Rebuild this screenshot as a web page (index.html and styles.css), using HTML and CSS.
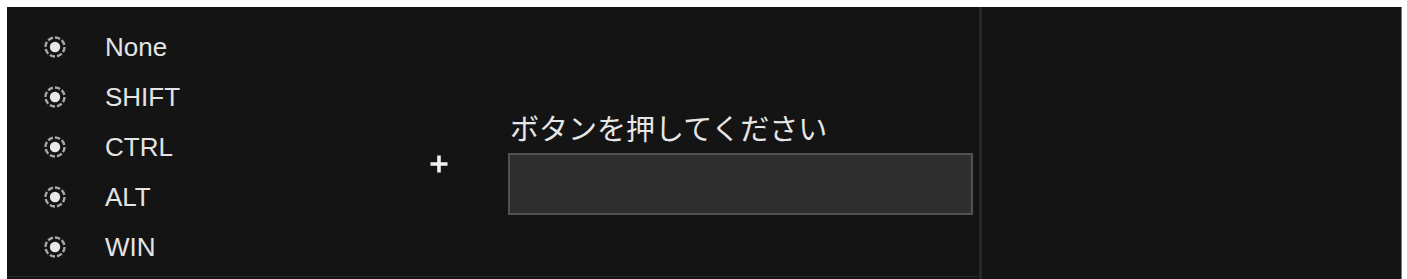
FILE: index.html
```html
<!DOCTYPE html>
<html lang="ja">
<head>
<meta charset="utf-8">
<link rel="stylesheet" href="styles.css">
</head>
<body>
<div class="panel">
  <div class="left">
    <ul class="modifiers">
      <li class="mod"><svg class="radio" viewBox="0 0 24 24"><circle cx="12" cy="12" r="9.5" class="ring"/><circle cx="12" cy="12" r="5.2" class="dot"/></svg><span>None</span></li>
      <li class="mod"><svg class="radio" viewBox="0 0 24 24"><circle cx="12" cy="12" r="9.5" class="ring"/><circle cx="12" cy="12" r="5.2" class="dot"/></svg><span>SHIFT</span></li>
      <li class="mod"><svg class="radio" viewBox="0 0 24 24"><circle cx="12" cy="12" r="9.5" class="ring"/><circle cx="12" cy="12" r="5.2" class="dot"/></svg><span>CTRL</span></li>
      <li class="mod"><svg class="radio" viewBox="0 0 24 24"><circle cx="12" cy="12" r="9.5" class="ring"/><circle cx="12" cy="12" r="5.2" class="dot"/></svg><span>ALT</span></li>
      <li class="mod"><svg class="radio" viewBox="0 0 24 24"><circle cx="12" cy="12" r="9.5" class="ring"/><circle cx="12" cy="12" r="5.2" class="dot"/></svg><span>WIN</span></li>
    </ul>
    <svg class="plus" viewBox="0 0 20 20"><path d="M10 1.5V18.5M1.5 10H18.5"/></svg>
    <div class="key-col">
      <div class="label">ボタンを押してください</div>
      <div class="key-input"></div>
    </div>
  </div>
  <div class="divider"></div>
  <div class="right"></div>
</div>
</body>
</html>
```

FILE: styles.css
```css
html, body {
  margin: 0;
  padding: 0;
  background: #ffffff;
}

body {
  width: 1407px;
  height: 279px;
  overflow: hidden;
  font-family: "Liberation Sans", Arial, sans-serif;
}

.panel {
  margin: 7px 0 0 7px;
  width: 1394px;
  height: 272px;
  background: #141414;
  border-right: 1px solid #7a7a7a;
  display: flex;
  box-sizing: content-box;
}

.left {
  width: 972px;
  display: flex;
  align-items: flex-start;
  border-bottom: 1px solid #262626;
  height: 269px;
}

.modifiers {
  list-style: none;
  margin: 0;
  padding: 15px 0 0 36px;
  width: 386px;
}

.mod {
  height: 50px;
  display: flex;
  align-items: center;
  color: #e4e4e4;
  font-size: 26px;
}

.radio {
  width: 24px;
  height: 24px;
  margin-right: 38px;
  flex: none;
}

.ring {
  fill: none;
  stroke: #a8a8a8;
  stroke-width: 2.4;
  stroke-dasharray: 5.4 2;
}

.dot {
  fill: #e8e8e8;
}

.plus {
  width: 20px;
  height: 20px;
  margin: 147px 0 0 0;
  flex: none;
}

.plus path {
  stroke: #f0f0f0;
  stroke-width: 3.6;
  fill: none;
}

.key-col {
  margin: 106px 0 0 59px;
  width: 465px;
}

.label {
  font-family: "Noto Sans CJK JP", "Liberation Sans", sans-serif;
  font-size: 29px;
  line-height: 29px;
  color: #e6e6e6;
  padding-left: 2px;
  margin-bottom: 11px;
  white-space: nowrap;
}

.key-input {
  height: 58px;
  background: #2e2e2e;
  border: 2px solid #525252;
}

.divider {
  width: 3px;
  background: #282828;
  flex: none;
}

.right {
  flex: 1;
  background: #141414;
}
```
